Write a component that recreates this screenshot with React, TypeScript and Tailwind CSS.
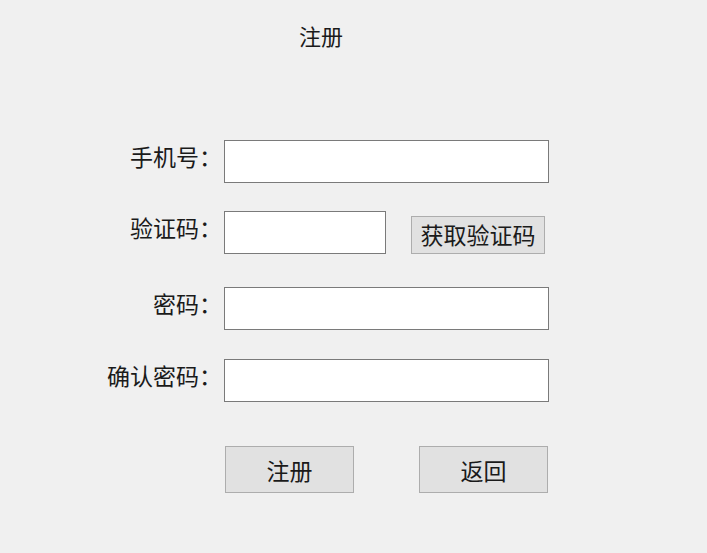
export default function App() {
  const font = { fontFamily: '"Noto Sans CJK SC", "Noto Sans", sans-serif' };

  return (
    <div
      className="w-full h-[553px] bg-[#f0f0f0] text-[#1a1a1a] overflow-hidden"
      style={font}
    >
      {/* Title */}
      <div className="pt-[23px] pl-[299px] text-[22px] leading-[24px]">注册</div>

      {/* Form */}
      <div className="mt-[93px] flex flex-col">
        <div className="flex items-center">
          <label className="w-[224px] pr-[2px] pb-[12px] text-right text-[23px] leading-[24px]">
            手机号：
          </label>
          <input className="w-[325px] h-[43px] bg-white border border-[#7a7a7a] outline-none px-2" />
        </div>

        <div className="mt-[28px] flex items-center">
          <label className="w-[224px] pr-[2px] pb-[12px] text-right text-[23px] leading-[24px]">
            验证码：
          </label>
          <input className="w-[162px] h-[43px] bg-white border border-[#7a7a7a] outline-none px-2" />
          <button className="ml-[25px] mt-[5px] w-[134px] h-[38px] bg-[#e1e1e1] border border-[#adadad] text-[23px] leading-[24px] pb-[2px]">
            获取验证码
          </button>
        </div>

        <div className="mt-[33px] flex items-center">
          <label className="w-[224px] pr-[2px] pb-[12px] text-right text-[23px] leading-[24px]">
            密码：
          </label>
          <input
            type="password"
            className="w-[325px] h-[43px] bg-white border border-[#7a7a7a] outline-none px-2"
          />
        </div>

        <div className="mt-[29px] flex items-center">
          <label className="w-[224px] pr-[2px] pb-[12px] text-right text-[23px] leading-[24px]">
            确认密码：
          </label>
          <input
            type="password"
            className="w-[325px] h-[43px] bg-white border border-[#7a7a7a] outline-none px-2"
          />
        </div>

        <div className="mt-[44px] pl-[225px] flex gap-[65px]">
          <button className="w-[129px] h-[47px] bg-[#e1e1e1] border border-[#adadad] text-[23px] leading-[24px]">
            注册
          </button>
          <button className="w-[129px] h-[47px] bg-[#e1e1e1] border border-[#adadad] text-[23px] leading-[24px]">
            返回
          </button>
        </div>
      </div>
    </div>
  );
}
